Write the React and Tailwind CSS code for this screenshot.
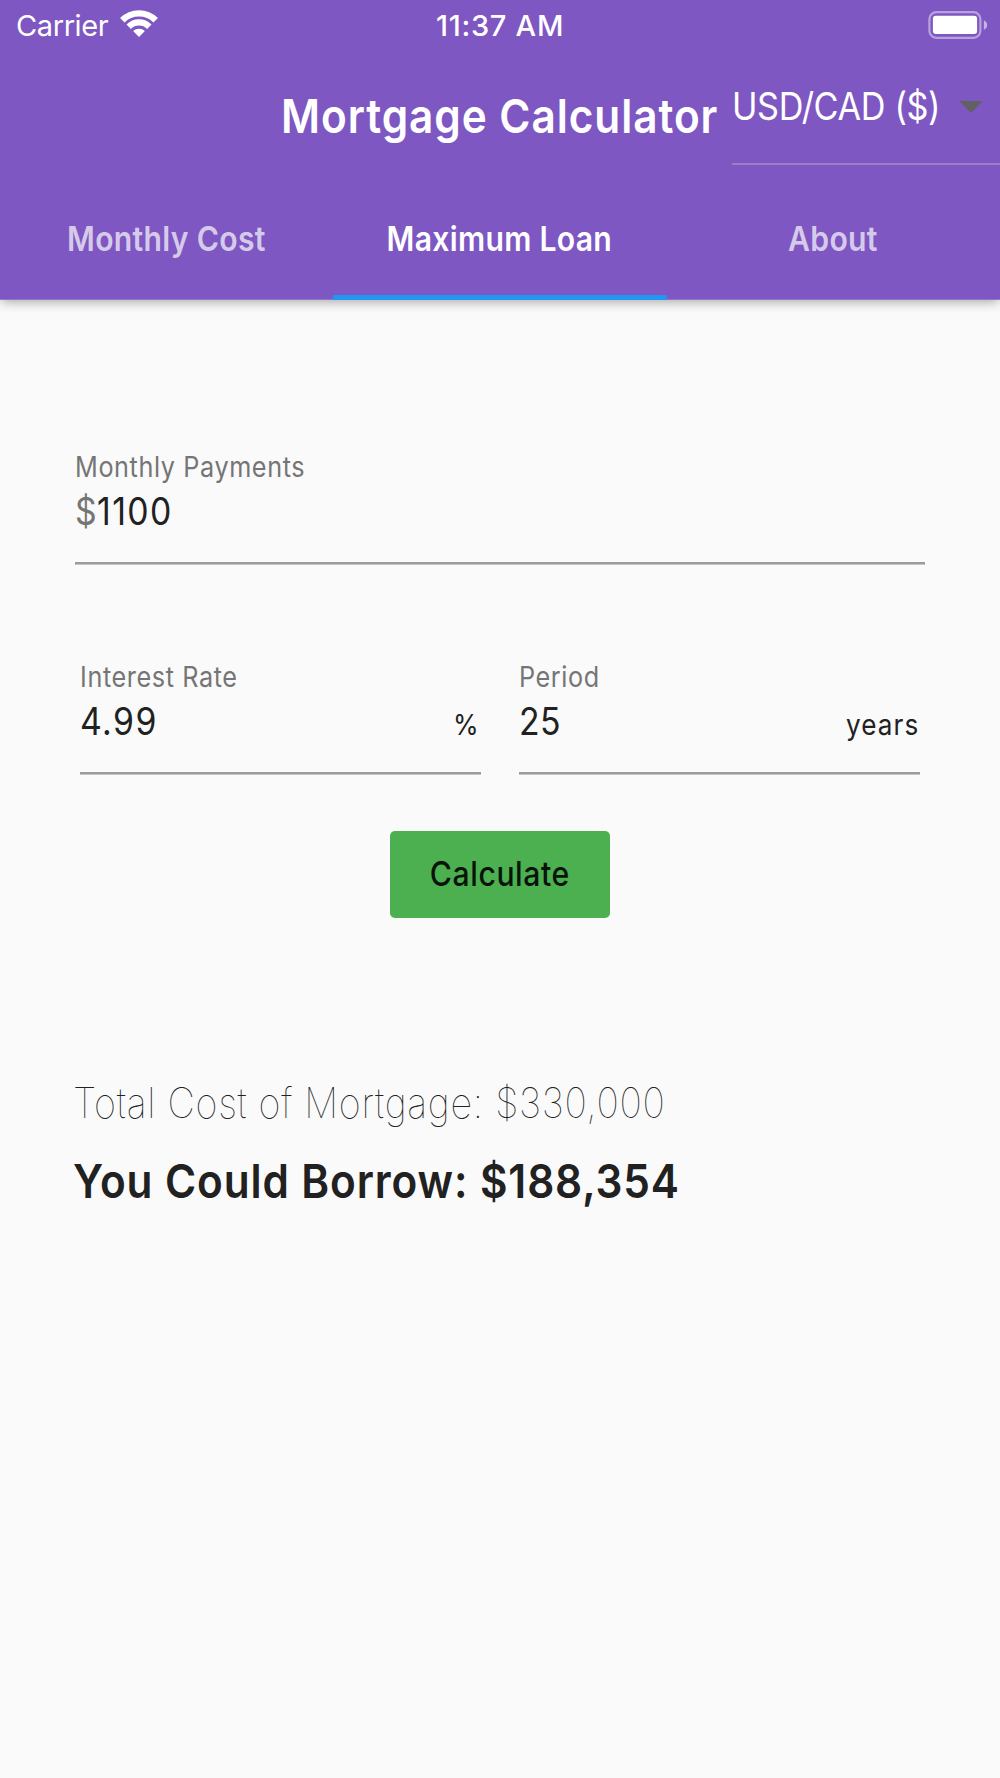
// Slightly condensed text; tracking and size come from the caller.
function Text({ className = "", children }) {
  return (
    <span className={`inline-block whitespace-nowrap scale-x-90 ${className}`}>{children}</span>
  );
}

function WifiIcon() {
  return (
    <svg width="40" height="29" viewBox="0 0 40 29" fill="none" className="block">
      <path d="M3.3 11.3A23.6 23.6 0 0 1 36.7 11.3" stroke="white" strokeWidth="6.4" />
      <path d="M9.7 17.7A14.5 14.5 0 0 1 30.3 17.7" stroke="white" strokeWidth="6.2" />
      <path d="M20 28L14.1 22.1A8.3 8.3 0 0 1 25.9 22.1Z" fill="white" />
    </svg>
  );
}

function BatteryIcon() {
  return (
    <svg width="60" height="28" viewBox="0 0 60 28" className="block">
      <rect x="1.4" y="1.2" width="51" height="25.6" rx="7" fill="none" stroke="white" strokeOpacity="0.45" strokeWidth="2.2" />
      <rect x="4.9" y="4.8" width="44.2" height="18.2" rx="3" fill="white" />
      <path d="M55.9 9.2Q59.2 10.8 59.2 14T55.9 18.8Z" fill="white" fillOpacity="0.55" />
    </svg>
  );
}

function StatusBar() {
  return (
    <div className="grid h-[50px] grid-cols-3 items-center text-[29px] leading-[50px] text-white">
      <div className="flex items-center">
        <span className="ml-[16px] w-[102.5px] pt-px tracking-[-0.4px] whitespace-nowrap">Carrier</span>
        <div className="mb-[4px]"><WifiIcon /></div>
      </div>
      <div className="pt-px text-center font-medium tracking-[0.73px] whitespace-nowrap">11:37 AM</div>
      <div className="flex justify-end pr-[12px] pb-px"><BatteryIcon /></div>
    </div>
  );
}

function CurrencySelect() {
  return (
    <div className="h-[115px] w-[268px] border-b-2 border-[#9b80c0]">
      <div className="flex items-center pt-[31px]">
        <div className="w-[227px]">
          <Text className="origin-left text-[38px] leading-[51px] tracking-[-0.4px]">USD/CAD ($)</Text>
        </div>
        <svg width="24" height="12" viewBox="0 0 24 12"><path d="M0.3 0H23.7L12 12Z" fill="#616161" /></svg>
      </div>
    </div>
  );
}

function Tab({ label, active }) {
  return (
    <div className={`flex h-[119px] flex-col items-center justify-between ${active ? "text-white" : "text-white/70"}`}>
      <Text className="pt-[33px] pr-px text-[33.5px] leading-[50px] font-semibold tracking-[0.33px]">{label}</Text>
      <div className={`h-[5px] w-full ${active ? "bg-[#2196f3]" : "border-b border-[#9077c8]"}`} />
    </div>
  );
}

function Field({ label, prefix, value, suffix, suffixWidth = "" }) {
  return (
    <div className="border-b-2 border-[#9b9b9b] text-[#212121] shadow-[0_1px_0_#c4c4c4]">
      <div className="h-[40px] pt-px">
        <Text className="origin-left text-[28px] leading-[40px] tracking-[0.68px] text-[#757575]">{label}</Text>
      </div>
      <div className="flex h-[76px] pt-px text-[37.5px] leading-[49px] whitespace-nowrap">
        {prefix && <div className="w-[22px]"><Text className="origin-left text-[#757575]">{prefix}</Text></div>}
        <div className="flex-1"><Text className={`origin-left ${value.length > 2 ? "tracking-[1.6px]" : "tracking-[0.4px]"}`}>{value}</Text></div>
        {suffix && (
          <div className={suffixWidth}>
            <Text className="origin-left pt-[2px] text-[29px] leading-[48px] tracking-[1.2px]">{suffix}</Text>
          </div>
        )}
      </div>
    </div>
  );
}

export default function App() {
  return (
    <div className="flex h-[1778px] w-[1000px] flex-col overflow-hidden bg-[#fafafa] font-['Inter',sans-serif]">
      <header className="h-[300px] bg-[#7e57c2] text-white shadow-[0_4px_10px_-2px_rgba(0,0,0,0.24),0_2px_12px_rgba(0,0,0,0.11)]">
        <StatusBar />
        <div className="flex h-[131px]">
          <h1 className="ml-[280.5px] w-[451.5px]">
            <Text className="origin-left text-[47px] leading-[131px] font-semibold tracking-[1.06px]">Mortgage Calculator</Text>
          </h1>
          <CurrencySelect />
        </div>
        <nav className="grid grid-cols-3">
          <Tab label="Monthly Cost" />
          <Tab label="Maximum Loan" active />
          <Tab label="About" />
        </nav>
      </header>

      <main className="px-[75px] pt-[146px]">
        <Field label="Monthly Payments" prefix="$" value="1100" />
        <div className="mt-[92px] grid grid-cols-2 gap-[38px] px-[5px]">
          <Field label="Interest Rate" value="4.99" suffix="%" suffixWidth="w-[28px]" />
          <Field label="Period" value="25" suffix="years" suffixWidth="w-[74px]" />
        </div>
        <div className="mt-[57px] flex justify-center">
          <button className="h-[87px] w-[220px] rounded-[5px] bg-[#4caf50] text-[#08140a]">
            <Text className="pr-px text-[33.5px] leading-[87px] font-medium tracking-[0.65px]">Calculate</Text>
          </button>
        </div>
        <div className="-ml-[2px] mt-[146px] text-[#212121]">
          <div className="h-[79px]">
            <Text className="origin-left text-[42px] leading-[78px] font-thin tracking-[0.78px]">Total Cost of Mortgage: $330,000</Text>
          </div>
          <div className="h-[75px]">
            <Text className="origin-left text-[47px] leading-[75px] font-semibold tracking-[1px]">You Could Borrow: $188,354</Text>
          </div>
        </div>
      </main>
    </div>
  );
}
